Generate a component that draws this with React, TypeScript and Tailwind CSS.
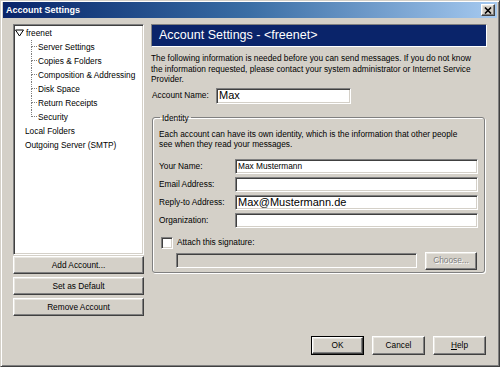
import React from "react";

const sunken =
  "border border-t-[#808080] border-l-[#808080] border-b-white border-r-white shadow-[inset_1px_1px_0_#404040,inset_-1px_-1px_0_#d4d0c8]";
const raised =
  "border border-t-white border-l-white border-b-[#404040] border-r-[#404040] shadow-[inset_-1px_-1px_0_#808080,inset_1px_1px_0_#e8e6e0]";

const children = [
  "Server Settings",
  "Copies & Folders",
  "Composition & Addressing",
  "Disk Space",
  "Return Receipts",
  "Security",
];

function TreeChild({ label, last }: { label: string; last: boolean }) {
  return (
    <div className="flex h-[14px] items-center">
      <div className="flex h-full w-[6px] flex-col">
        <div className="h-[7px] border-b border-l border-dotted border-[#808080]" />
        <div
          className={
            "h-[7px] " + (last ? "" : "border-l border-dotted border-[#808080]")
          }
        />
      </div>
      <span className="pl-[1px]">{label}</span>
    </div>
  );
}

function Btn({
  label,
  className = "",
  disabled = false,
}: {
  label: React.ReactNode;
  className?: string;
  disabled?: boolean;
}) {
  return (
    <button
      className={
        "flex items-center justify-center bg-[#d4d0c8] " +
        raised +
        " " +
        (disabled ? "text-[#808080] [text-shadow:1px_1px_0_#fff] " : "text-black ") +
        className
      }
    >
      {label}
    </button>
  );
}

function Field({ label, value, big }: { label: string; value?: string; big?: boolean }) {
  return (
    <div className="flex h-[15px] items-center">
      <span className="w-[76px] shrink-0">{label}</span>
      <div
        className={
          "flex h-[15px] w-[243px] items-center bg-white pl-[2px] " +
          sunken +
          (big ? " text-[11px]" : "")
        }
      >
        {value}
      </div>
    </div>
  );
}

export default function App() {
  return (
    <div
      className="flex h-[367px] w-[500px] flex-col overflow-hidden border border-t-[#d4d0c8] border-l-[#d4d0c8] border-b-[#404040] border-r-[#404040] bg-[#d4d0c8] text-[8.3px] leading-[10.5px] text-black shadow-[inset_1px_1px_0_#fff,inset_-1px_-1px_0_#808080]"
      style={{ fontFamily: '"Liberation Sans", Arial, sans-serif' }}
    >
      {/* Title bar */}
      <div className="mx-[2px] mt-[1px] flex h-[16px] items-center justify-between bg-gradient-to-r from-[#0a246a] via-[#3a6ea5] to-[#a6caf0] pl-[3px] pr-[2px]">
        <span className="text-[9px] font-bold text-white">Account Settings</span>
        <div className={"flex h-[12px] w-[14px] items-center justify-center bg-[#d4d0c8] " + raised}>
          <svg width="8" height="7" viewBox="0 0 8 7">
            <path d="M1 0.5 L7 6.5 M7 0.5 L1 6.5" stroke="#000" strokeWidth="1.6" />
          </svg>
        </div>
      </div>

      {/* Body */}
      <div className="flex pl-[12px] pt-[6px]">
        {/* Left column */}
        <div className="flex w-[131px] flex-col">
          <div className={"h-[231px] bg-white pt-[1px] " + sunken}>
            <div className="flex h-[14px] items-center pl-[1px]">
              <svg width="9" height="8" viewBox="0 0 9 8" className="mr-[2px]">
                <path d="M0.5 1 L8.5 1 L4.5 7 Z" fill="none" stroke="#000" strokeWidth="1" />
              </svg>
              <span>freenet</span>
            </div>
            <div className="ml-[17px]">
              {children.map((c, i) => (
                <TreeChild key={c} label={c} last={i === children.length - 1} />
              ))}
            </div>
            <div className="flex h-[14px] items-center pl-[11px]">Local Folders</div>
            <div className="flex h-[14px] items-center pl-[11px]">Outgoing Server (SMTP)</div>
          </div>
          <div className="mt-[1px] flex flex-col gap-[3px]">
            <Btn label="Add Account..." className="h-[18px]" />
            <Btn label="Set as Default" className="h-[18px]" />
            <Btn label="Remove Account" className="h-[18px]" />
          </div>
        </div>

        {/* Right column */}
        <div className="ml-[7px] flex w-[336px] flex-col">
          <div className="flex h-[23px] items-center border border-t-[#808080] border-l-[#808080] border-b-white border-r-white bg-[#0a246a] pl-[7px] text-[12.5px] text-white">
            Account Settings - &lt;freenet&gt;
          </div>
          <p className="mt-[6px]">
            The following information is needed before you can send messages. If you do not know
            <br />
            the information requested, please contact your system administrator or Internet Service
            <br />
            Provider.
          </p>
          <div className="mt-[3px] flex h-[16px] items-center pl-[1px]">
            <span className="w-[64px]">Account Name:</span>
            <div className={"flex h-[16px] w-[135px] items-center bg-white pl-[2px] text-[11px] " + sunken}>
              Max
            </div>
          </div>

          <fieldset className="ml-[1px] mt-[9px] h-[160px] w-[333px] rounded-[3px] border border-[#808080] px-[6px] shadow-[1px_1px_0_#fff,inset_1px_1px_0_#fff]">
            <legend className="ml-[1px] px-[2px] leading-[10px]">Identity</legend>
            <p className="mt-[6px]">
              Each account can have its own identity, which is the information that other people
              <br />
              see when they read your messages.
            </p>
            <div className="mt-[9px] flex flex-col gap-[3px]">
              <Field label="Your Name:" value="Max Mustermann" />
              <Field label="Email Address:" />
              <Field label="Reply-to Address:" value="Max@Mustermann.de" big />
              <Field label="Organization:" />
            </div>
            <div className="mt-[9px] flex h-[12px] items-center pl-[2px]">
              <div className={"mr-[4px] h-[12px] w-[12px] bg-white " + sunken} />
              <span>Attach this signature:</span>
            </div>
            <div className="mt-[3px] flex items-center pl-[17px]">
              <div className={"h-[15px] w-[241px] bg-[#d4d0c8] " + sunken} />
              <Btn label="Choose..." disabled className="ml-[8px] h-[18px] w-[52px]" />
            </div>
          </fieldset>
        </div>
      </div>

      {/* Footer */}
      <div className="mt-[20px] flex justify-end gap-[8px] pr-[13px]">
        <div className="border border-black">
          <Btn label="OK" className="h-[17px] w-[51px]" />
        </div>
        <Btn label="Cancel" className="h-[19px] w-[53px]" />
        <Btn
          label={
            <span>
              <span className="underline">H</span>elp
            </span>
          }
          className="h-[19px] w-[53px]"
        />
      </div>
    </div>
  );
}
